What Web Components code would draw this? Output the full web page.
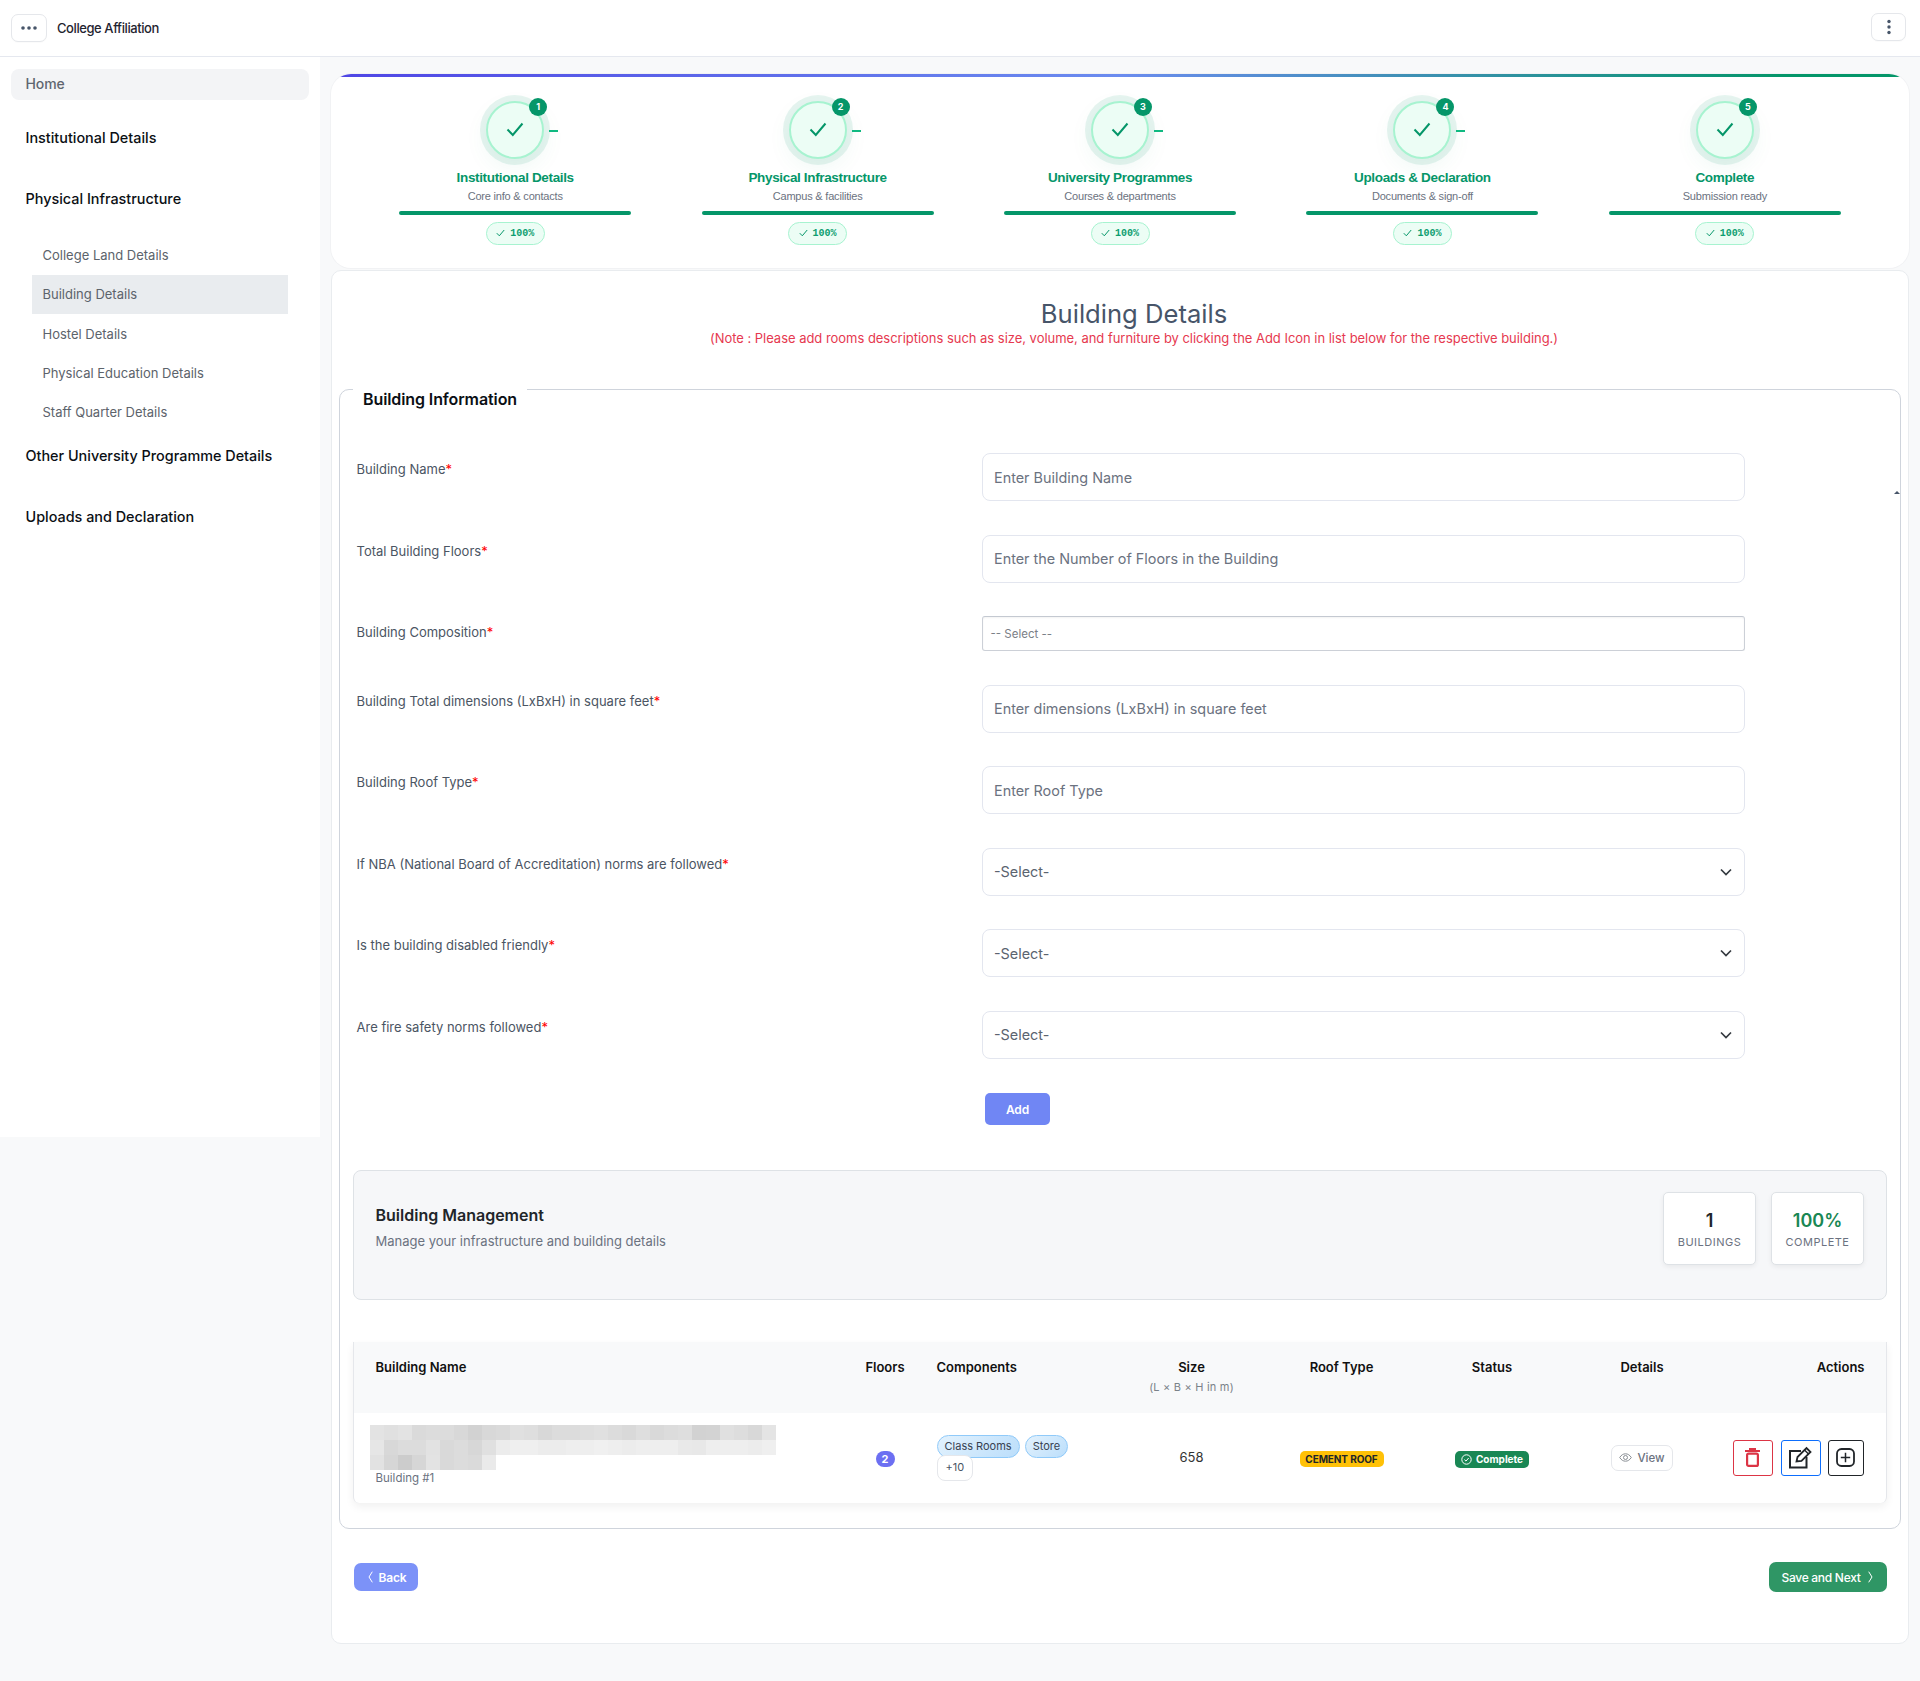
<!DOCTYPE html>
<html lang="en">
<head>
<meta charset="utf-8">
<title>College Affiliation</title>
<style>
html,body{margin:0;padding:0;background:#f8f9fa;font-family:Inter,"Liberation Sans",sans-serif;color:#212529}
</style>
</head>
<body>
<affiliation-app></affiliation-app>
<script>
function comp(name, css, html, init){
  const t=document.createElement('template');
  t.innerHTML='<style>'+css+'</style>'+html;
  customElements.define(name, class extends HTMLElement{
    constructor(){super();this.attachShadow({mode:'open'}).appendChild(t.content.cloneNode(true));}
    connectedCallback(){ if(init) init(this, this.shadowRoot); }
  });
}
const attr=(el,root,map)=>{for(const k in map){const n=root.querySelector(map[k]);if(n)n.textContent=el.getAttribute(k)||'';}};

comp('app-header',`
:host{display:flex;align-items:center;justify-content:space-between;box-sizing:border-box;height:57px;background:#fff;border-bottom:1px solid #e5e8ef;padding:0 14px 0 11px}
.l{display:flex;align-items:center;gap:10px}
.b{box-sizing:border-box;width:36px;height:28px;border:1px solid #e5e7eb;border-radius:7px;display:flex;align-items:center;justify-content:center;background:#fff;box-shadow:0 1px 1px rgba(0,0,0,.02)}
.t{font-size:13px;font-weight:500;color:#1f2430;letter-spacing:-.42px}
`,`<div class="l"><div class="b"><svg width="18" height="4" viewBox="0 0 18 4"><g fill="#475569"><circle cx="3" cy="2" r="1.8"/><circle cx="9" cy="2" r="1.8"/><circle cx="15" cy="2" r="1.8"/></g></svg></div><span class="t">College Affiliation</span></div>
<div class="b" style="height:28px;width:35px;margin-top:-2px"><svg width="4" height="16" viewBox="0 0 4 16"><g fill="#475569"><circle cx="2" cy="2.5" r="1.7"/><circle cx="2" cy="8" r="1.7"/><circle cx="2" cy="13.5" r="1.7"/></g></svg></div>`);

comp('nav-home',`:host{display:flex;align-items:center;box-sizing:border-box;height:31px;margin:12px 11px 6.5px;padding:0 0 2px 14.5px;background:#f3f4f6;border-radius:8px;font-size:14px;font-weight:500;color:#5f6670;letter-spacing:-.1px}`,`<slot></slot>`);
comp('nav-head',`:host{display:flex;align-items:center;height:61px;padding-left:25.5px;font-size:14.4px;font-weight:500;color:#0b0f14}`,`<slot></slot>`);
comp('nav-sub',`:host{display:block;margin:7px 32px -7px}`,`<slot></slot>`);
comp('nav-link',`:host{display:flex;align-items:center;box-sizing:border-box;height:39.3px;padding-left:10.5px;font-size:13px;color:#5c636b}
:host([active]){background:#e9ecef}`,`<slot></slot>`);
comp('side-nav',`:host{display:block;width:320px;height:1080px;flex:none;background:#fff}`,`<slot></slot>`);

comp('step-item',`
:host{display:flex;flex-direction:column;align-items:center;flex:1 1 0;min-width:0}
.c{position:relative;box-sizing:border-box;width:58px;height:58px;margin-top:24px;border:2px solid #a7f3d0;border-radius:50%;background:#ecfdf5;display:flex;align-items:center;justify-content:center;box-shadow:0 0 0 6px rgba(5,150,105,.1),0 8px 25px rgba(5,150,105,.07)}
.c>svg{margin-top:-2px}
.n{position:absolute;right:-5px;top:-5px;width:18px;height:18px;border-radius:50%;background:#059669;color:#fff;font:700 9px/18px Inter,sans-serif;text-align:center}
.d{position:absolute;left:61px;top:27px;width:9px;height:2px;background:#10b981}
:host([last]) .d{display:none}
.l{margin-top:10px;font:700 13.5px/18px "Liberation Sans",sans-serif;color:#059669;letter-spacing:-.35px;white-space:nowrap}
.s{margin-top:1px;font:400 11px/16px "Liberation Sans",sans-serif;color:#6b7280;letter-spacing:-.2px;white-space:nowrap}
.p{width:232px;height:4px;margin-top:7px;border-radius:3px;background:#059669}
.o{box-sizing:border-box;display:flex;align-items:center;justify-content:center;gap:5px;width:59px;height:23px;margin-top:7px;border:1px solid #a7f3d0;border-radius:12px;background:#ecfdf5;font:700 10px/1 "Liberation Mono",monospace;color:#0d9e70}
svg{display:block}
`,`<div class="c"><svg width="18" height="15" viewBox="0 0 18 15"><path d="M1.5 7.5 6.8 13 16.5 1.5" fill="none" stroke="#059669" stroke-width="2"/></svg><span class="n"></span><span class="d"></span></div>
<div class="l"></div><div class="s"></div><div class="p"></div>
<div class="o"><svg width="9" height="8" viewBox="0 0 9 8" style="margin-top:-2px"><path d="M.8 4.2 3.3 6.8 8.2 1" fill="none" stroke="#059669" stroke-width="1"/></svg><span>100%</span></div>`,
(el,r)=>attr(el,r,{n:'.n',label:'.l',sub:'.s'}));

comp('step-tracker',`
:host{display:block;position:relative;box-sizing:border-box;height:194px;border-radius:20px;background:#fff;overflow:hidden;box-shadow:0 0 0 1px #f1f2f4}
.bar{height:3px;background:linear-gradient(90deg,#4f46e5,#6b8cef 50%,#059669 92%)}
.r{display:flex;padding:0 32.5px 0 33px}
`,`<div class="bar"></div><div class="r"><slot></slot></div>`);

comp('form-row',`
:host{display:grid;grid-template-columns:625px 763px;margin-bottom:33.5px;padding-left:16.5px}
.lb{padding-top:6px;font-size:13px;line-height:20px;color:#4b5563}
.lb i{font-style:normal;color:#f00}
`,`<div class="lb"><span class="t"></span><i>*</i></div><div><slot></slot></div>`,
(el,r)=>attr(el,r,{label:'.t'}));

comp('text-field',`
:host{display:flex;align-items:center;justify-content:space-between;box-sizing:border-box;height:48px;padding:0 12px 0 11.5px;border:1px solid #e3e6ef;border-radius:8px;background:#fff;font-size:14.4px;color:#6b7280}
svg{display:none}
:host([select]){color:#5b6470}
:host([select]) svg{display:block}
`,`<slot></slot><svg width="12" height="8" viewBox="0 0 12 8"><path d="M1 1.5 6 6.5 11 1.5" fill="none" stroke="#343a40" stroke-width="1.7"/></svg>`);

comp('plain-select',`
:host{display:flex;align-items:center;box-sizing:border-box;height:35px;margin-bottom:0;padding-left:8px;border:1px solid #ccd0d7;border-top-color:#c4c9d1;border-radius:3px;background:#fff;box-shadow:inset 0 1px 2px rgba(0,0,0,.05);font-size:11.5px;color:#7a8087}
`,`<slot></slot>`);

comp('stat-card',`
:host{display:flex;flex-direction:column;align-items:center;box-sizing:border-box;width:93px;height:73px;padding-top:17px;border:1px solid #dee2e6;border-radius:5px;background:#fff;box-shadow:0 2px 5px rgba(0,0,0,.06)}
.v{font-size:18px;line-height:22px;font-weight:600;color:#212529}
:host([ok]) .v{color:#198754}
.k{margin-top:2px;font-size:11px;line-height:16px;letter-spacing:.5px;color:#6b7280}
`,`<div class="v"></div><div class="k"></div>`,(el,r)=>attr(el,r,{value:'.v',key:'.k'}));

comp('manage-panel',`
:host{display:flex;justify-content:space-between;box-sizing:border-box;height:130px;padding:21px 22px 0 21.5px;margin:0 12.5px 0 13px;background:#f6f7f9;border:1px solid #dee2e6;border-radius:8px}
.h{padding-top:12px;font-size:16px;line-height:22px;font-weight:600;color:#212529}
.s{margin-top:5px;font-size:13px;line-height:20px;color:#6b7280}
.st{display:flex;gap:15px}
`,`<div><div class="h">Building Management</div><div class="s">Manage your infrastructure and building details</div></div><div class="st"><slot></slot></div>`);

const blur=(()=>{
 const rows=[
 ['e3','e0','e3','da','dc','dc','d8','d2','d8','da','e0','de','d8','dc','dc','de','e0','dc','d9','de','d9','dc','de','d2','d3','e0','dd','d8','e4'],
 ['e6','d8','dc','dc','e2','d9','dc','d7','e0','ec','ef','ef','ec','ec','ee','ee','f0','ee','ec','ee','ee','ee','e9','e8','ee','ee','ee','ec','ef'],
 ['e2','d6','cc','d6','e3','d9','dc','da','ea']];
 let s='';
 rows.forEach((r,y)=>r.forEach((c,x)=>{s+=`<rect x="${x*14}" y="${y*15}" width="14" height="15" fill="#${c}${c}${c}"/>`;}));
 return `<svg width="406" height="45" viewBox="0 0 406 45" shape-rendering="crispEdges" aria-hidden="true">${s}</svg>`;
})();

comp('building-table',`
:host{display:block;margin:41.5px 12.5px 0 13px;box-shadow:0 4px 8px rgba(0,0,0,.06);border-left:1px solid #e5e7eb;border-right:1px solid #e5e7eb;border-radius:0 0 6px 6px;background:#fff}
.g{display:grid;grid-template-columns:496px 70px 190px 163px 137px 164px 136px 175.5px}
.hd{height:71px;background:#f8f9fa;font-size:13px;font-weight:600;color:#111}
.hd>div{padding-top:15.5px;line-height:20px;text-align:center}
.hd>div.left{text-align:left}
.hd>div.right{text-align:right;padding-right:21px}
.hd small{display:block;font-size:11px;line-height:16px;font-weight:400;color:#7b8289;margin-top:2px;letter-spacing:.2px}
.rw{height:90px;align-items:center;font-size:13px;color:#333}
.rw>div{display:flex;justify-content:center;align-items:center}
.name{flex-direction:column;align-items:flex-start !important;justify-content:flex-start !important;align-self:start;padding:12px 0 0 15.5px}
.name svg{display:block}
.name span{margin:1px 0 0 6px;font-size:11.5px;line-height:15px;color:#6b7280}
.fl{box-sizing:border-box;width:19px;height:16px;border-radius:8px;background:#6c6ff2;color:#fff;font-size:11px;font-weight:700;line-height:16px;text-align:center;margin-top:2px}
.tc{justify-content:flex-start !important}
.tags{display:flex;flex-wrap:wrap;gap:0 5px;box-sizing:border-box;width:160px;padding-left:16.5px}
.tag{box-sizing:border-box;height:23px;padding:0 7px;border:1px solid #90caf9;border-radius:11.5px;background:linear-gradient(135deg,#e3f2fd,#bbdefb);font-size:11px;line-height:21px;color:#374151;white-space:nowrap}
.more{box-sizing:border-box;height:25.5px;width:36.5px;margin-top:-2.5px;border:1px solid #e5e7eb;border-radius:8px;background:#fff;font-size:11px;line-height:23px;text-align:center;color:#4b5563}
.sz{margin-top:-2px}
.roof{box-sizing:border-box;width:84px;height:16px;border-radius:5px;background:#ffc107;color:#212529;font-size:10px;font-weight:700;line-height:16px;text-align:center;margin-top:2px;letter-spacing:-.1px}
.ok{display:flex;align-items:center;justify-content:center;gap:4px;width:74px;height:17px;border-radius:5px;background:#198754;color:#fff;font-size:10px;font-weight:700;margin-top:3px}
.view{display:flex;align-items:center;justify-content:center;gap:5px;box-sizing:border-box;width:62px;height:26px;border:1px solid #e5e7eb;border-radius:7px;font-size:11.5px;font-weight:500;color:#6b7280}
.acts{justify-content:flex-end !important;padding-right:22px}
.a{box-sizing:border-box;display:flex;align-items:center;justify-content:center;width:40px;height:36px;border:1px solid;border-radius:3px;background:#fff}
.a.r{border-color:#dc3545;margin-right:8px}
.a.b{border-color:#0d6efd;margin-right:7px}
.a.k{border-color:#212529;width:36px}
`,`<div class="g hd">
<div class="left" style="padding-left:21.5px">Building Name</div><div>Floors</div><div class="left" style="padding-left:16.5px">Components</div><div>Size<small>(L × B × H in m)</small></div><div>Roof Type</div><div>Status</div><div>Details</div><div class="right">Actions</div></div>
<div class="g rw">
<div class="name">${blur}<span>Building #1</span></div>
<div><span class="fl">2</span></div>
<div class="tc"><div class="tags"><span class="tag">Class Rooms</span><span class="tag">Store</span><span class="more">+10</span></div></div>
<div><span class="sz">658</span></div>
<div><span class="roof">CEMENT ROOF</span></div>
<div><span class="ok"><svg width="11" height="11" viewBox="0 0 11 11"><circle cx="5.5" cy="5.5" r="4.7" fill="none" stroke="#fff"/><path d="M3.4 5.6 5 7.1 7.7 4" fill="none" stroke="#fff"/></svg>Complete</span></div>
<div><span class="view"><svg width="13" height="9" viewBox="0 0 13 9"><path d="M.7 4.5C2.3 2 4.2.8 6.5.8s4.2 1.2 5.8 3.7C10.7 7 8.8 8.2 6.5 8.2S2.3 7 .7 4.5Z" fill="none" stroke="#8b9096"/><circle cx="6.5" cy="4.5" r="2" fill="none" stroke="#8b9096"/></svg>View</span></div>
<div class="acts">
<span class="a r"><svg width="15" height="19" viewBox="0 0 15 19"><path d="M0 3h15M5 2.500V1h5v1.500" fill="none" stroke="#dc3545" stroke-width="2"/><rect x="2.1" y="5.6" width="10.8" height="12.3" rx="1.5" fill="none" stroke="#dc3545" stroke-width="2.2"/></svg></span>
<span class="a b"><svg width="23" height="23" viewBox="0 0 23 23"><path d="M12 5H1v16.500h16.500V11" fill="none" stroke="#212529" stroke-width="2"/><path d="M7.500 15.500 8.500 11 17.500 2 21.500 6 12.500 15Z" fill="#fff" stroke="#212529" stroke-width="1.800"/><path d="M15.500 4 19.500 8" stroke="#212529" stroke-width="1.500"/></svg></span>
<span class="a k"><svg width="19" height="19" viewBox="0 0 19 19"><rect x="1" y="1" width="17" height="17" rx="4.5" fill="none" stroke="#212529" stroke-width="1.8"/><path d="M9.500 4.800v9.400M4.800 9.500h9.400" stroke="#212529" stroke-width="1.500"/></svg></span>
</div></div>`);

comp('info-fieldset',`
:host{display:block;position:relative;box-sizing:border-box;margin:0 7px;height:1140px;padding-top:63px;border:1px solid #cfd4dc;border-radius:10px;background:#fff}
.lg{position:absolute;left:13px;top:-3px;height:24px;padding:0 10px;background:#fff;font-size:16px;line-height:24px;font-weight:600;color:#0b0f14;letter-spacing:-.1px}
.tick{position:absolute;right:0;top:101px;width:0;height:0;border-left:3px solid transparent;border-right:3px solid transparent;border-bottom:3px solid #475569}
`,`<div class="lg">Building Information</div><span class="tick"></span><slot></slot>`);

comp('action-button',`
:host{display:inline-flex;align-items:center;justify-content:center;gap:7px;box-sizing:border-box;border-radius:7px;color:#fff;font-size:12px;font-weight:600;letter-spacing:-.1px}
:host([kind=add]){width:65px;height:32px;margin:1px 0 45px 645px;background:#7086f4;border-radius:5px}
:host([kind=back]){width:64px;height:28px;gap:5px;padding-left:3px;background:#7c92f8}
:host([kind=next]){width:118px;height:30px;gap:7px;padding-right:2px;background:#2f9665;font-weight:500;letter-spacing:-.28px}
`,`<slot></slot>`);

comp('main-card',`
:host{display:block;box-sizing:border-box;margin-top:2px;height:1374px;padding-top:27px;border:1px solid #e9ecef;border-radius:10px;background:#fff}
h1{margin:0;padding-left:28.5px;font-size:25.6px;line-height:32px;font-weight:400;text-align:center;color:#475569}
.nt{margin:-2px 0 41px;padding-left:28.5px;font-size:13px;line-height:20px;letter-spacing:-.03px;text-align:center;color:#e6394f}
.ft{display:flex;justify-content:space-between;align-items:center;margin:33px 20.5px 0 22px}
`,`<h1>Building Details</h1><div class="nt">(Note : Please add rooms descriptions such as size, volume, and furniture by clicking the Add Icon in list below for the respective building.)</div>
<slot></slot><div class="ft"><slot name="foot"></slot></div>`);

comp('affiliation-app',`
:host{display:block;height:1681px;overflow:hidden;background:#f8f9fa}
.b{display:flex;align-items:flex-start}
main{flex:1;min-width:0;padding:17px 11.5px 0 11px}
`,`<app-header></app-header>
<div class="b">
<side-nav>
<nav-home>Home</nav-home>
<nav-head>Institutional Details</nav-head>
<nav-head>Physical Infrastructure</nav-head>
<nav-sub><nav-link>College Land Details</nav-link><nav-link active>Building Details</nav-link><nav-link>Hostel Details</nav-link><nav-link>Physical Education Details</nav-link><nav-link>Staff Quarter Details</nav-link></nav-sub>
<nav-head>Other University Programme Details</nav-head>
<nav-head>Uploads and Declaration</nav-head>
</side-nav>
<main>
<step-tracker>
<step-item n="1" label="Institutional Details" sub="Core info &amp; contacts"></step-item>
<step-item n="2" label="Physical Infrastructure" sub="Campus &amp; facilities"></step-item>
<step-item n="3" label="University Programmes" sub="Courses &amp; departments"></step-item>
<step-item n="4" label="Uploads &amp; Declaration" sub="Documents &amp; sign-off"></step-item>
<step-item n="5" label="Complete" sub="Submission ready" last></step-item>
</step-tracker>
<main-card>
<info-fieldset>
<form-row label="Building Name"><text-field>Enter Building Name</text-field></form-row>
<form-row label="Total Building Floors"><text-field>Enter the Number of Floors in the Building</text-field></form-row>
<form-row label="Building Composition"><plain-select>-- Select --</plain-select></form-row>
<form-row label="Building Total dimensions (LxBxH) in square feet"><text-field>Enter dimensions (LxBxH) in square feet</text-field></form-row>
<form-row label="Building Roof Type"><text-field>Enter Roof Type</text-field></form-row>
<form-row label="If NBA (National Board of Accreditation) norms are followed"><text-field select>-Select-</text-field></form-row>
<form-row label="Is the building disabled friendly"><text-field select>-Select-</text-field></form-row>
<form-row label="Are fire safety norms followed"><text-field select>-Select-</text-field></form-row>
<action-button kind="add">Add</action-button>
<manage-panel><stat-card value="1" key="BUILDINGS"></stat-card><stat-card ok value="100%" key="COMPLETE"></stat-card></manage-panel>
<building-table></building-table>
</info-fieldset>
<action-button slot="foot" kind="back"><svg width="5" height="12" viewBox="0 0 5 12"><path d="M4.3 .7 1 6l3.3 5.3" fill="none" stroke="#fff"/></svg>Back</action-button>
<action-button slot="foot" kind="next">Save and Next<svg width="5" height="12" viewBox="0 0 5 12"><path d="M.7 .7 4 6 .7 11.3" fill="none" stroke="#fff"/></svg></action-button>
</main-card>
</main>
</div>`);
</script>
</body>
</html>
